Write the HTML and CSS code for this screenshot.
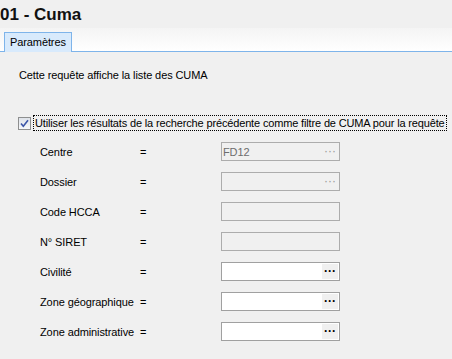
FILE: index.html
```html
<!DOCTYPE html>
<html>
<head>
<meta charset="utf-8">
<link rel="stylesheet" href="styles.css">
</head>
<body>
<div class="page">
  <h1 class="title">01 - Cuma</h1>
  <div class="tabbar">
    <div class="tab">Paramètres</div>
  </div>
  <div class="content">
    <p class="desc">Cette requête affiche la liste des CUMA</p>
    <label class="check">
      <span class="box"><svg width="11" height="11" viewBox="0 0 11 11"><path d="M2 5.5 L4.3 8.2 L9 2.2" fill="none" stroke="#3b55a8" stroke-width="1.6"/></svg></span>
      <span class="checktext">Utiliser les résultats de la recherche précédente comme filtre de CUMA pour la requête</span>
    </label>
    <div class="rows">
      <div class="row"><span class="lbl">Centre</span><span class="eq">=</span><div class="field disabled"><span class="val">FD12</span><span class="btn">···</span></div></div>
      <div class="row"><span class="lbl">Dossier</span><span class="eq">=</span><div class="field disabled"><span class="val"></span><span class="btn">···</span></div></div>
      <div class="row"><span class="lbl">Code HCCA</span><span class="eq">=</span><div class="field disabled"><span class="val"></span></div></div>
      <div class="row"><span class="lbl">N° SIRET</span><span class="eq">=</span><div class="field disabled"><span class="val"></span></div></div>
      <div class="row"><span class="lbl">Civilité</span><span class="eq">=</span><div class="field"><span class="val"></span><span class="btn">···</span></div></div>
      <div class="row"><span class="lbl">Zone géographique</span><span class="eq">=</span><div class="field"><span class="val"></span><span class="btn">···</span></div></div>
      <div class="row"><span class="lbl">Zone administrative</span><span class="eq">=</span><div class="field"><span class="val"></span><span class="btn">···</span></div></div>
    </div>
  </div>
</div>
</body>
</html>
```
FILE: styles.css
```css
html, body { margin: 0; padding: 0; }
body {
  background: #f0f0f0;
  font-family: "Liberation Sans", Arial, sans-serif;
  font-size: 11px;
  letter-spacing: -0.1px;
  color: #000;
  width: 452px;
  height: 359px;
  overflow: hidden;
}
.page { display: flex; flex-direction: column; }
.title {
  margin: 0;
  padding: 5px 0 0 0;
  height: 28px;
  box-sizing: border-box;
  font-family: "Liberation Sans", Arial, sans-serif;
  font-weight: bold;
  font-size: 17px;
  letter-spacing: 0;
  line-height: 20px;
  color: #111;
  background: #f0f0f0;
}
.tabbar {
  height: 24px;
  box-sizing: border-box;
  background: linear-gradient(#f4f4f4, #ffffff);
  border-bottom: 1px solid #7eb4ea;
  display: flex;
  align-items: flex-end;
  padding-left: 4px;
}
.tab {
  box-sizing: border-box;
  padding: 2px 5px 0 5px;
  border: 1px solid #7eb4ea;
  border-bottom: none;
  background: #d8eafc;
  margin-bottom: -1px;
  height: 20px;
  font-size: 11px;
  line-height: 15px;
}
.content { padding: 0 0 0 19px; }
.desc { margin: 15px 0 0 0; line-height: 16px; }
.check {
  display: flex;
  align-items: center;
  margin: 32px 0 0 -1px;
  height: 16px;
}
.box {
  width: 11px; height: 11px;
  border: 1px solid #8e8f8f;
  background: linear-gradient(#dfe3ea, #f6f7f9);
  display: flex;
  margin-right: 2px;
}
.checktext {
  border: 1px dotted #000;
  padding: 0 1px;
  line-height: 14px;
  white-space: nowrap;
  letter-spacing: -0.15px;
}
.rows { display: flex; flex-direction: column; gap: 11px; margin-top: 11px; }
.row { display: flex; align-items: center; height: 19px; white-space: nowrap; }
.lbl { width: 121px; padding-left: 21px; box-sizing: border-box; }
.eq { width: 81px; }
.field {
  width: 119px; height: 19px;
  box-sizing: border-box;
  border: 1px solid #a0a0a0;
  background: #fff;
  display: flex;
  align-items: center;
}
.field.disabled { background: #f0f0f0; border-color: #acacac; }
.val { flex: 1; color: #6d6d6d; padding-left: 1px; }
.btn {
  width: 16px; height: 15px;
  margin-right: 1px;
  background: #f0f0f0;
  font-weight: bold;
  font-size: 12px;
  line-height: 14px;
  text-align: center;
  color: #000;
  letter-spacing: 0;
}
.disabled .btn { color: #9a9a9a; font-weight: normal; background: transparent; }
```
